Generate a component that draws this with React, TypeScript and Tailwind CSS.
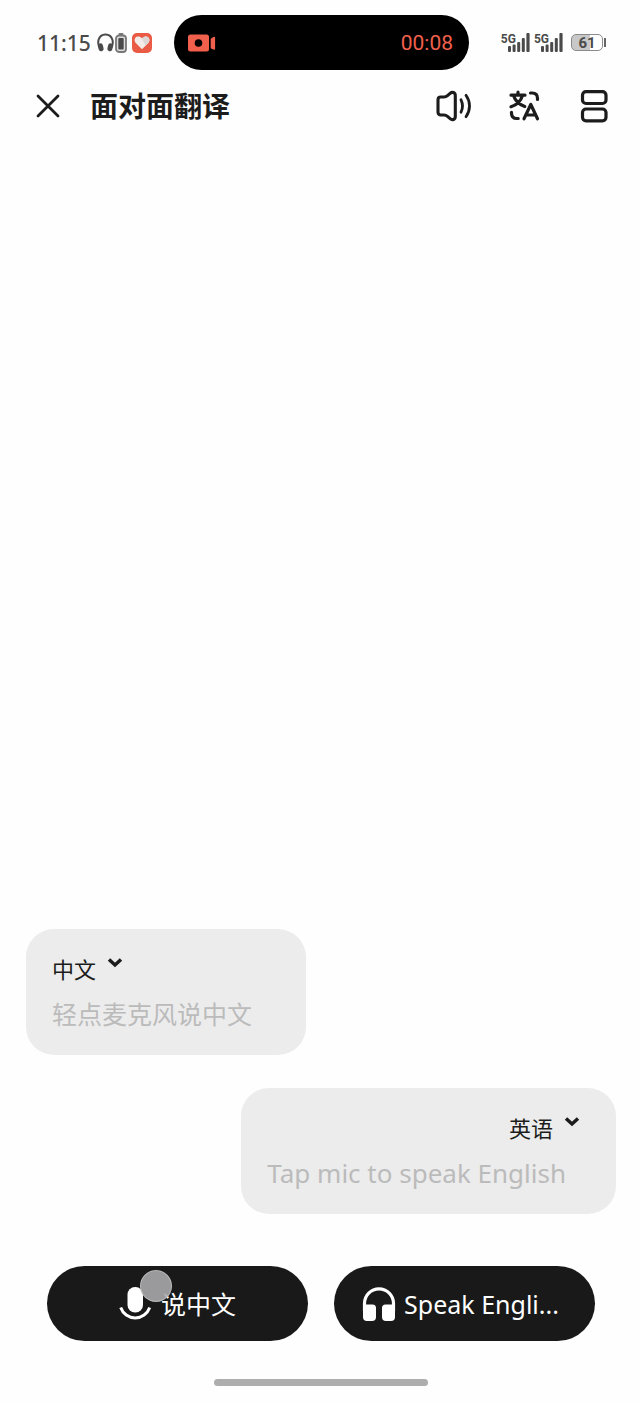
import { useState } from "react";

// Tipos
type Language = {
  value: string;
  label: string;
};

type LanguageCardProps = {
  id: string;
  hint: string;
  options: Language[];
  align: "start" | "end";
};

const languages: Language[] = [
  { value: "zh", label: "中文" },
  { value: "en", label: "英语" },
];

const HeadphonesIcon = ({ className }: { className: string }) => (
  <svg viewBox="0 0 34 34" className={className} aria-hidden="true">
    <path d="M2.500 24V16.300a14.500 14.500 0 0 1 29 0V24" fill="none" stroke="currentColor" strokeWidth="3.200" />
    <path d="M1 17.500h9.500a3.500 3.500 0 0 1 3.500 3.500V30a4 4 0 0 1-4 4H5a4 4 0 0 1-4-4zM33 17.500h-9.500a3.500 3.500 0 0 0-3.500 3.500V30a4 4 0 0 0 4 4H29a4 4 0 0 0 4-4z" fill="currentColor" />
  </svg>
);

const Signal = () => (
  <div className="flex items-start">
    <span className="font-[Roboto] text-[12px] leading-3 font-bold">5G</span>
    <svg viewBox="0 0 22 19" className="-ml-2 h-[19px] w-[22px]" fill="currentColor" aria-hidden="true">
      <rect x="0" y="13" width="3" height="6" rx="1" />
      <rect x="4.600" y="11.500" width="3" height="7.500" rx="1" />
      <rect x="9.200" y="9" width="3" height="10" rx="1" />
      <rect x="13.800" y="5" width="3" height="14" rx="1" />
      <rect x="18.400" y="0" width="3.200" height="19" rx="1" />
    </svg>
  </div>
);

const StatusBar = () => (
  <div className="grid grid-cols-[1fr_auto_1fr] items-center pt-[15px] pr-[34px] pl-[37px] text-[#4a4a4a]">
    <div className="flex items-center">
      <span className="text-[21px] leading-6 font-medium">11:15</span>
      <svg viewBox="0 0 17 19" className="ml-[6px] h-[19px] w-[17px]" aria-hidden="true">
        <path d="M3.600 16C-.6 11 .8 1.400 8.500 1.400S17.600 11 13.400 16" fill="none" stroke="currentColor" strokeWidth="2" />
        <rect x="1.300" y="10.300" width="5" height="8" rx="2.300" transform="rotate(-14 3.800 14.500)" fill="currentColor" />
        <rect x="10.700" y="10.300" width="5" height="8" rx="2.300" transform="rotate(14 13.200 14.500)" fill="currentColor" />
      </svg>
      <svg viewBox="0 0 12 20" className="ml-px h-5 w-3" aria-hidden="true">
        <rect x="3.500" y="0" width="5" height="2" rx="1" fill="#777" />
        <rect x="1" y="2.500" width="10" height="16.500" rx="3" fill="#ddd" stroke="#777" strokeWidth="1.800" />
        <rect x="3.300" y="5" width="5.400" height="11.500" rx="1" fill="currentColor" />
      </svg>
      <svg viewBox="0 0 20 20" className="ml-[5px] h-5 w-5" aria-hidden="true">
        <rect width="20" height="20" rx="5" fill="#ea5b45" />
        <path d="M10 16.300 3.300 9.600a4 4 0 0 1 0-4.800c1.600-1.900 4.500-1.700 6.700.6 2.200-2.300 5.100-2.500 6.700-.6a4 4 0 0 1 0 4.800z" fill="#f3ebe8" />
        <path d="M10 5.400c2.200-2.300 5.100-2.500 6.700-.6a4 4 0 0 1 0 4.800L13.500 12.800z" fill="#dcd7d5" />
      </svg>
    </div>
    <div className="flex h-[55px] w-[295px] items-center justify-between rounded-full bg-black pr-4 pl-[14px] text-[#f0604c]">
      <svg viewBox="0 0 28 18" className="h-[18px] w-7" fill="currentColor" aria-label="录屏">
        <rect x="0" y=".5" width="21" height="17" rx="2.500" />
        <path d="M23.500 5.200 26.300 3.500v11.500l-2.800-1.200z" stroke="currentColor" strokeWidth="1.600" strokeLinejoin="round" />
        <circle cx="10.500" cy="9" r="3.800" fill="#000" />
      </svg>
      <span className="font-[Roboto] text-[21px] leading-6">00:08</span>
    </div>
    <div className="flex items-center justify-end">
      <Signal />
      <div className="ml-1">
        <Signal />
      </div>
      <div className="ml-2 flex items-center">
        <div className="flex h-[17px] w-8 items-center justify-center rounded-[5px] border border-[#8a8a8a] bg-linear-to-r from-[#c8c8c8] from-61% to-white to-61%">
          <span className="font-[Roboto] text-[15px] leading-4 font-bold">61</span>
        </div>
        <div className="ml-px h-[9px] w-[2px] bg-[#666]" />
      </div>
    </div>
  </div>
);

const Header = () => (
  <header className="flex h-[72px] items-center pr-7 pl-[30px] text-[#1c1c1c]">
    <button type="button" aria-label="关闭" className="cursor-pointer">
      <svg viewBox="0 0 36 36" className="size-9" fill="none" stroke="currentColor" strokeWidth="2.800" strokeLinecap="round">
        <path d="M8 8l20 20M28 8 8 28" />
      </svg>
    </button>
    <h1 className="ml-6 flex-1 text-[28px] leading-9 font-bold">面对面翻译</h1>
    <div className="flex gap-[34px]">
      <button type="button" aria-label="朗读" className="cursor-pointer">
        <svg viewBox="0 0 36 36" className="size-9" fill="none" stroke="currentColor" strokeWidth="3.100" strokeLinecap="round" strokeLinejoin="round">
          <path d="M4.700 9H8c1.400 0 2.400-.4 3.500-1.400l2.600-2.300c2.200-1.900 5.200-.8 5.200 2.200v21c0 3-3 4.100-5.200 2.200l-2.600-2.300C10.400 27.400 9.400 27 8 27H4.700c-1.700 0-2.700-1.100-2.700-2.700V11.700C2 10.100 3 9 4.700 9z" />
          <path d="M25 11.800c1.900 3.900 1.900 8.500 0 12.400M30 7.300c4.700 6.600 4.700 14.800 0 21.400" strokeWidth="2.800" />
        </svg>
      </button>
      <button type="button" aria-label="切换翻译" className="cursor-pointer">
        <svg viewBox="0 0 36 36" className="size-9" fill="none" stroke="currentColor" strokeWidth="3.200" strokeLinecap="round" strokeLinejoin="round">
          <path d="M5 7.200h14M12 4.200v3M7.500 7.500c1.700 5.200 6 9.200 11.300 11M16.500 7.500C14.800 13 10.800 17 5 18.700" />
          <path d="M24.500 5h1.700c3.300 0 5.300 2 5.300 5.300v1.200M5.500 24.300v.9c0 3.300 2 5.300 5.300 5.300h1.400" />
          <path d="M18 30.800 24.800 16.500l6.700 14.300M20.500 27h8.600" />
        </svg>
      </button>
      <button type="button" aria-label="分屏" className="cursor-pointer">
        <svg viewBox="0 0 36 36" className="size-9" fill="none" stroke="currentColor" strokeWidth="3.200">
          <rect x="6.500" y="3.700" width="23.500" height="11.800" rx="3.500" />
          <rect x="6.500" y="21" width="23.500" height="11.800" rx="3.500" />
        </svg>
      </button>
    </div>
  </header>
);

const LanguageCard = ({ id, hint, options, align }: LanguageCardProps) => {
  const [language, setLanguage] = useState(id);

  return (
    <section
      className={`flex min-w-[280px] flex-col gap-3 rounded-[28px] bg-[#ececec] pt-[26px] pr-[50px] pb-[22px] pl-[26px] ${
        align === "end" ? "self-end" : "self-start"
      }`}
    >
      <div className={`flex ${align === "end" ? "-mr-[14px] justify-end" : ""}`}>
        <select
          aria-label="语言"
          value={language}
          onChange={(e) => setLanguage(e.target.value)}
          className="h-7 w-11 cursor-pointer appearance-none bg-transparent text-[22px] leading-7 text-[#1c1c1c] outline-none"
        >
          {options.map((option) => (
            <option key={option.value} value={option.value}>
              {option.label}
            </option>
          ))}
        </select>
        <svg viewBox="0 0 16 16" className="ml-[11px] size-4" fill="none" stroke="#1c1c1c" strokeWidth="3.500" aria-hidden="true">
          <path d="M2 4.500l6 5.500 6-5.500" />
        </svg>
      </div>
      <p className={`leading-[38px] text-[#bbbbbb] ${id === "zh" ? "text-[25px]" : "text-[26px]"}`}>{hint}</p>
    </section>
  );
};

const App = () => {
  return (
    <div className="flex min-h-screen flex-col bg-[#fefefe] font-['Noto_Sans','Noto_Sans_CJK_SC',sans-serif]">
      <StatusBar />
      <Header />

      <main className="flex flex-1 flex-col justify-end gap-[33px] pr-6 pl-[26px]">
        <LanguageCard id="zh" hint="轻点麦克风说中文" options={languages} align="start" />
        <LanguageCard id="en" hint="Tap mic to speak English" options={languages} align="end" />
      </main>

      <footer className="pt-[52px] pr-[45px] pb-4 pl-[47px]">
        <div className="grid grid-cols-2 gap-[26px]">
          <button
            type="button"
            className="relative flex h-[75px] cursor-pointer items-center justify-center gap-[10px] rounded-full bg-[#191919] text-white"
          >
            <svg viewBox="0 0 32 34" className="h-[34px] w-8" aria-hidden="true">
              <rect x="8.500" y="0" width="15.500" height="25.500" rx="7.500" fill="currentColor" />
              <path d="M1.700 20.500a15.300 15.300 0 0 0 29 0" fill="none" stroke="currentColor" strokeWidth="3" />
            </svg>
            <span className="text-[25px] leading-9">说中文</span>
            {/* marca do toque */}
            <span className="absolute top-1 left-[93px] size-8 rounded-full border border-[#c2c2c2]/80 bg-[#a9a9ab]/90" />
          </button>
          <button
            type="button"
            className="flex h-[75px] cursor-pointer items-center justify-center gap-2 rounded-full bg-[#191919] pr-2 text-white"
          >
            <HeadphonesIcon className="size-[34px]" />
            <span className="text-[25px] leading-9">Speak Engli...</span>
          </button>
        </div>
        <div className="mx-auto mt-[38px] h-[7px] w-[214px] rounded-full bg-[#adadad]" />
      </footer>
    </div>
  );
};

export default App;
